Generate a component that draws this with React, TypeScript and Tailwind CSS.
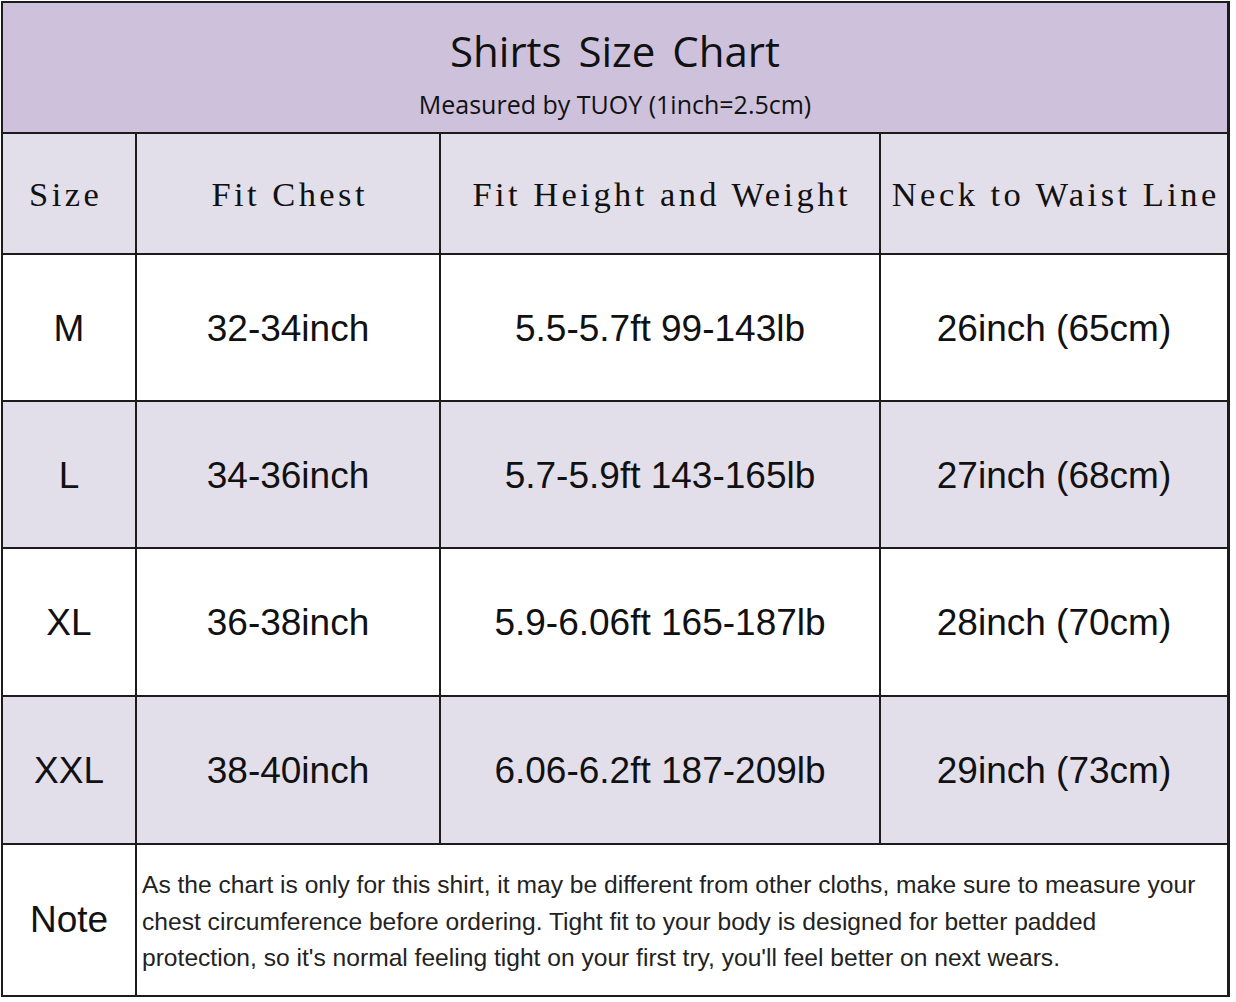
// App.tsx
const rows = [
  { size: 'M', chest: '32-34inch', hw: '5.5-5.7ft 99-143lb', neck: '26inch (65cm)', shade: false, h: 'h-[145px]' },
  { size: 'L', chest: '34-36inch', hw: '5.7-5.9ft 143-165lb', neck: '27inch (68cm)', shade: true, h: 'h-[145px]' },
  { size: 'XL', chest: '36-38inch', hw: '5.9-6.06ft 165-187lb', neck: '28inch (70cm)', shade: false, h: 'h-[146px]' },
  { size: 'XXL', chest: '38-40inch', hw: '6.06-6.2ft 187-209lb', neck: '29inch (73cm)', shade: true, h: 'h-[146px]' },
];

const headers = ['Size', 'Fit Chest', 'Fit Height and Weight', 'Neck to Waist Line'];

// Size chart laid out as a grid; the gaps show the dark background as cell borders
export default function App() {
  return (
    <div className="min-h-screen w-[1236px] bg-white pl-[1px] pt-[1px]">
      <div className="grid w-[1229px] grid-cols-[132px_302px_438px_346px] gap-[2px] bg-[#1c1c1c] p-[2px]">
        {/* Title */}
        <div className="col-span-4 flex h-[129px] flex-col items-center bg-[#cdc1dc] pt-[22px] font-['Open_Sans','Noto_Sans',sans-serif] text-[#111]">
          <h1 className="text-[42px] font-medium leading-[52px] [word-spacing:6px]">Shirts Size Chart</h1>
          <p className="mt-[11px] text-[25px] leading-[32px]">Measured by TUOY (1inch=2.5cm)</p>
        </div>

        {/* Header row */}
        {headers.map((h, i) => (
          <div
            key={h}
            className={`flex h-[119px] items-center justify-center bg-[#e3dfea] pt-[2px] font-['Liberation_Serif',serif] text-[34.5px] tracking-[0.1em] text-[#111] ${i === 0 ? 'pr-[10px]' : ''}`}
          >
            <span className="mr-[-0.1em]">{h}</span>
          </div>
        ))}

        {/* Size rows */}
        {rows.map((r) =>
          [r.size, r.chest, r.hw, r.neck].map((v, i) => (
            <div
              key={r.size + i}
              className={`flex ${r.h} items-center justify-center pt-[2px] font-['Liberation_Sans',Arial,sans-serif] text-[37px] text-[#111] ${r.shade ? 'bg-[#e3dfea]' : 'bg-white'}`}
            >
              {v}
            </div>
          ))
        )}

        {/* Note */}
        <div className="flex h-[150px] items-center justify-center bg-white font-['Liberation_Sans',Arial,sans-serif] text-[37px] text-[#111]">
          Note
        </div>
        <div className="col-span-3 flex h-[150px] items-center bg-white pl-[5px] pt-[4px] font-['Liberation_Sans',Arial,sans-serif] text-[24.6px] leading-[36.5px] text-[#222]">
          <p className="whitespace-nowrap">
            As the chart is only for this shirt, it may be different from other cloths, make sure to measure your
            <br />
            chest circumference before ordering. Tight fit to your body is designed for better padded
            <br />
            protection, so it's normal feeling tight on your first try, you'll feel better on next wears.
          </p>
        </div>
      </div>
    </div>
  );
}
